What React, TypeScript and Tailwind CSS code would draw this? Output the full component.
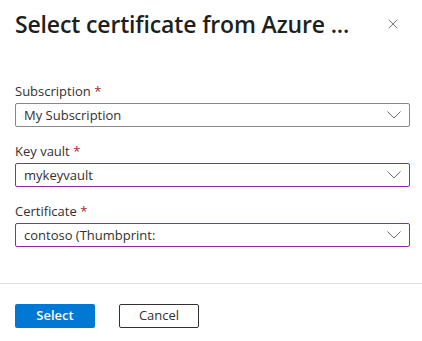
import { X } from 'lucide-react';

const fields = [
  { label: 'Subscription', value: 'My Subscription', focused: false },
  { label: 'Key vault', value: 'mykeyvault', focused: true },
  { label: 'Certificate', value: 'contoso (Thumbprint:', focused: true },
];

function Chevron() {
  return (
    <svg width="14" height="8" viewBox="0 0 14 8" fill="none" className="text-[#605e5c]">
      <polyline points="0.5,0.5 7,7 13.5,0.5" stroke="currentColor" strokeWidth="0.9" />
    </svg>
  );
}

export default function App() {
  return (
    <div className="w-[422px] h-[341px] bg-white flex flex-col font-['Open_Sans',sans-serif] text-[#323130]">
      {/* Header */}
      <div className="flex items-start justify-between pl-[15px] pr-[21px] pt-[8px]">
        <h1 className="text-[23px] leading-[32px] font-semibold text-[#201f1e] tracking-[-0.15px]">
          Select certificate from Azure ...
        </h1>
        <button className="mt-[8px] text-[#605e5c]" aria-label="Close">
          <X size={16} strokeWidth={1.25} />
        </button>
      </div>

      {/* Form */}
      <div className="flex flex-col gap-[14px] pl-[15px] pr-[12px] pt-[41px]">
        {fields.map((f) => (
          <div key={f.label} className="flex flex-col">
            <label className="text-[13px] leading-[20px] mb-[2px]">
              {f.label} <span className="text-[#a4262c]">*</span>
            </label>
            <div
              className={`h-[24px] flex items-center justify-between pl-[8px] pr-[8px] border ${
                f.focused ? 'border-[#8a2da5]' : 'border-[#8a8886]'
              } rounded-[2px]`}
            >
              <span className="text-[13px] leading-none">{f.value}</span>
              <Chevron />
            </div>
          </div>
        ))}
      </div>

      {/* Footer */}
      <div className="mt-auto border-t border-[#e1dfdd] px-[15px] pt-[20px] pb-[13px] flex gap-[24px]">
        <button className="w-[80px] h-[24px] bg-[#0078d4] text-white text-[13px] font-semibold rounded-[2px]">
          Select
        </button>
        <button className="w-[80px] h-[24px] bg-white border border-[#323130] text-[13px] rounded-[2px]">
          Cancel
        </button>
      </div>
    </div>
  );
}
